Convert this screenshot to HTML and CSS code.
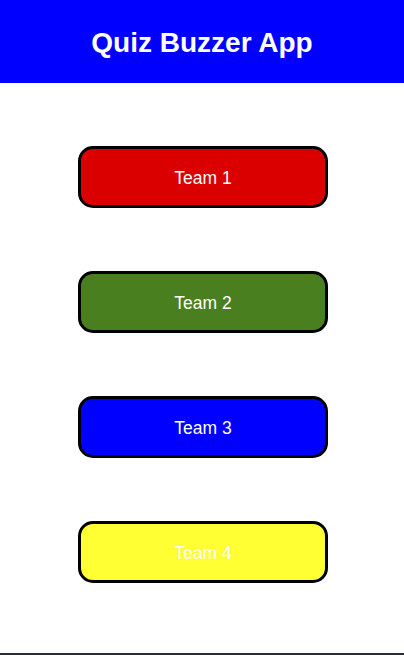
FILE: index.html
```html
<!DOCTYPE html>
<html>
<head>
<meta charset="utf-8">
<link rel="stylesheet" href="styles.css">
</head>
<body>
<div class="app">
  <header class="header"><h1 class="title">Quiz Buzzer App</h1></header>
  <main class="teams">
    <button class="team team-red">Team 1</button>
    <button class="team team-green">Team 2</button>
    <button class="team team-blue">Team 3</button>
    <button class="team team-yellow">Team 4</button>
  </main>
  <div class="bottom-bar"></div>
</div>
</body>
</html>
```
FILE: styles.css
```css
html, body {
  margin: 0;
  padding: 0;
  background: #ffffff;
  font-family: "Liberation Sans", Arial, sans-serif;
}
.app {
  height: 655px;
  display: flex;
  flex-direction: column;
}
.header {
  height: 83px;
  background: #0000ff;
  display: flex;
  align-items: center;
  justify-content: center;
}
.title {
  margin: 0;
  padding-top: 2px;
  color: #ffffff;
  font-size: 28px;
  font-weight: bold;
}
.teams {
  flex: 1;
  display: flex;
  flex-direction: column;
  align-items: flex-start;
  gap: 63px;
  padding-top: 63px;
  padding-left: 78px;
}
.team {
  box-sizing: border-box;
  width: 250px;
  height: 62px;
  border: 3px solid #000000;
  border-radius: 15px;
  color: #ffffff;
  font-family: "Liberation Sans", Arial, sans-serif;
  font-size: 17.5px;
  padding: 2px 0 0 0;
}
.team-red { background: #db0000; }
.team-green { background: #4a7f20; }
.team-blue { background: #0000ff; }
.team-yellow { background: #ffff33; }
.bottom-bar {
  height: 2px;
  background: #2a2d34;
}
```
